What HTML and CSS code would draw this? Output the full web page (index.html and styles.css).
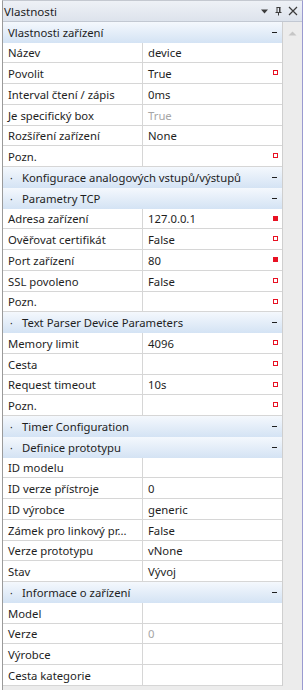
FILE: index.html
```html
<!DOCTYPE html>
<html>
    <head>
        <meta charset="utf-8">
        <link rel="stylesheet" href="styles.css">
    </head>
    <body>
        <div id="panel">
            <div class="titlebar">
                <span class="title">Vlastnosti</span>
                <span class="tools">
                    <svg width="9" height="6" viewBox="0 0 9 6"><path d="M1 1.5h7l-3.5 4z" fill="#3c3c3c"/></svg>
                    <svg width="9" height="10" viewBox="0 0 9 10"><path d="M2.5 1.5h4M3 1.5v5M6 1.5v5M1.5 6.5h6M4.5 6.5v3" stroke="#3c3c3c" fill="none"/><path d="M5 2h1v4.5h-1z" fill="#3c3c3c"/></svg>
                    <svg width="10" height="10" viewBox="0 0 10 10"><path d="M1 1l8 8M9 1l-8 8" stroke="#3c3c3c" stroke-width="1.2" fill="none"/></svg>
                </span>
            </div>
            <div class="body">
                <div class="grid">
                    <div class="cat first"><span class="label">Vlastnosti zařízení</span><span class="minus"></span></div>
                    <div class="row"><div class="name">Název</div><div class="val">device</div></div>
                    <div class="row"><div class="name">Povolit</div><div class="val">True<i class="mark"></i></div></div>
                    <div class="row"><div class="name">Interval čtení / zápis</div><div class="val">0ms</div></div>
                    <div class="row"><div class="name">Je specifický box</div><div class="val off">True</div></div>
                    <div class="row"><div class="name">Rozšíření zařízení</div><div class="val">None</div></div>
                    <div class="row"><div class="name">Pozn.</div><div class="val"><i class="mark"></i></div></div>

                    <div class="cat"><span class="dot">·</span><span class="label">Konfigurace analogových vstupů/výstupů</span><span class="minus"></span></div>

                    <div class="cat"><span class="dot">·</span><span class="label">Parametry TCP</span><span class="minus"></span></div>
                    <div class="row"><div class="name">Adresa zařízení</div><div class="val">127.0.0.1<i class="mark full"></i></div></div>
                    <div class="row"><div class="name">Ověřovat certifikát</div><div class="val">False<i class="mark"></i></div></div>
                    <div class="row"><div class="name">Port zařízení</div><div class="val">80<i class="mark full"></i></div></div>
                    <div class="row"><div class="name">SSL povoleno</div><div class="val">False<i class="mark"></i></div></div>
                    <div class="row"><div class="name">Pozn.</div><div class="val"><i class="mark"></i></div></div>

                    <div class="cat"><span class="dot">·</span><span class="label">Text Parser Device Parameters</span><span class="minus"></span></div>
                    <div class="row"><div class="name">Memory limit</div><div class="val">4096<i class="mark"></i></div></div>
                    <div class="row"><div class="name">Cesta</div><div class="val"><i class="mark"></i></div></div>
                    <div class="row"><div class="name">Request timeout</div><div class="val">10s<i class="mark"></i></div></div>
                    <div class="row"><div class="name">Pozn.</div><div class="val"><i class="mark"></i></div></div>

                    <div class="cat"><span class="dot">·</span><span class="label">Timer Configuration</span><span class="minus"></span></div>

                    <div class="cat"><span class="dot">·</span><span class="label">Definice prototypu</span><span class="minus"></span></div>
                    <div class="row"><div class="name">ID modelu</div><div class="val"></div></div>
                    <div class="row"><div class="name">ID verze přístroje</div><div class="val">0</div></div>
                    <div class="row"><div class="name">ID výrobce</div><div class="val">generic</div></div>
                    <div class="row"><div class="name">Zámek pro linkový pr...</div><div class="val">False</div></div>
                    <div class="row"><div class="name">Verze prototypu</div><div class="val">vNone</div></div>
                    <div class="row"><div class="name">Stav</div><div class="val">Vývoj</div></div>

                    <div class="cat"><span class="dot">·</span><span class="label">Informace o zařízení</span><span class="minus"></span></div>
                    <div class="row"><div class="name">Model</div><div class="val"></div></div>
                    <div class="row"><div class="name">Verze</div><div class="val off">0</div></div>
                    <div class="row"><div class="name">Výrobce</div><div class="val"></div></div>
                    <div class="row"><div class="name">Cesta kategorie</div><div class="val"></div></div>
                </div>
                <div class="scrollbar">
                    <svg width="9" height="5" viewBox="0 0 9 5"><path d="M0.5 4.5l4-4 4 4z" fill="#c6c6c6"/></svg>
                </div>
            </div>
        </div>
    </body>
</html>
```

FILE: styles.css
```css
*{ padding: 0px; margin: 0px; box-sizing: border-box; }

html, body
{
    width: 100%;
    height: 100%;
    overflow: hidden;
    background: #ffffff;
}

body
{
    font-family: "Noto Sans", "Open Sans", sans-serif;
    font-size: 11.3px;
    color: #1e1e1e;
}

#panel
{
    margin-left: 2px;
    height: 100%;
    border-left: 1px solid #9a9a9a;
    border-right: 1px solid #9a9ad0;
    border-top: 1px solid #c4c8d0;
    display: flex;
    flex-direction: column;
    background: #ececec;
}

.titlebar
{
    height: 21px;
    display: flex;
    align-items: center;
    justify-content: space-between;
    padding: 0 4px 0 1px;
    background: linear-gradient(#eef1f6, #dde3ec);
    border-bottom: 1px solid #c2c8d2;
    color: #1e1e1e;
    font-size: 11.6px;
}

.tools
{
    display: flex;
    align-items: center;
    gap: 5px;
}

.body
{
    flex: 1;
    display: flex;
}

.grid
{
    width: 280px;
    align-self: flex-start;
    background: #ffffff;
    border-right: 1px solid #cfcfcf;
}

/* rows are 21px, every fourth one 20px (the original pitch is 20.75) */
.grid > div { height: 21px; }
.grid > div:nth-child(4n+2) { height: 20px; }

.cat
{
    display: flex;
    align-items: center;
    padding: 0 5px 0 5px;
    background: linear-gradient(#f4f8fd, #d4e3f4);
}

.cat .dot
{
    width: 14px;
    padding-left: 2px;
    font-size: 10px;
}

.cat .label { flex: 1; white-space: nowrap; }

.minus
{
    width: 5px;
    height: 1px;
    background: #1e1e1e;
}

.row
{
    display: grid;
    grid-template-columns: 140px 1fr;
    border-bottom: 1px solid #d6d6d6;
}

.name
{
    padding-left: 5px;
    border-right: 1px solid #d6d6d6;
    display: flex;
    align-items: center;
    white-space: nowrap;
    overflow: hidden;
}

.val
{
    padding: 0 4px 0 5px;
    display: flex;
    align-items: center;
    white-space: nowrap;
}

.val.off { color: #a6a6a6; }

.mark
{
    margin-left: auto;
    align-self: flex-start;
    margin-top: 7px;
    width: 5px;
    height: 5px;
    border: 1px solid #e81123;
    background: #ffffff;
}

.mark.full { background: #e81123; }

.scrollbar
{
    flex: 1;
    display: flex;
    justify-content: center;
    padding-top: 9px;
}

.scrollbar svg { display: block; }
```
